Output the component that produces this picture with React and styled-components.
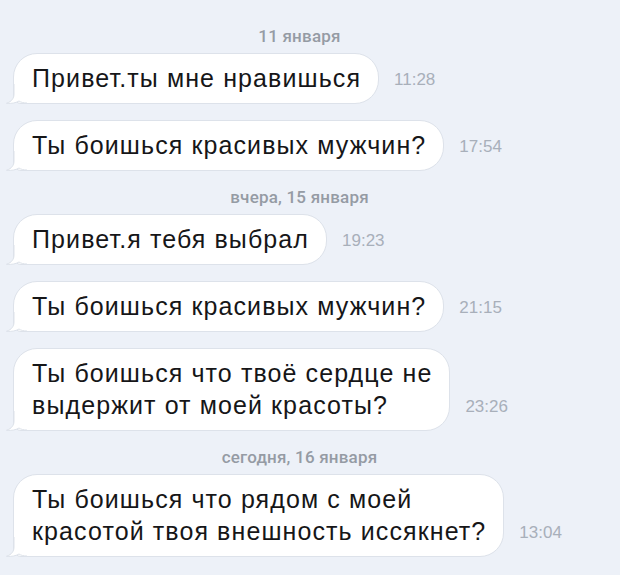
import React from "react";
import styled, { createGlobalStyle } from "styled-components";

const GlobalStyle = createGlobalStyle`
  * {
    margin: 0;
    padding: 0;
    box-sizing: border-box;
  }

  body {
    background-color: #edf1f8;
    font-family: "Liberation Sans", Arial, sans-serif;
    -webkit-font-smoothing: antialiased;
  }
`;

/* --- CHAT --- */
const Chat = styled.div`
  width: 620px;
  height: 575px;
  overflow: hidden;
  display: flex;
  flex-direction: column;
  padding: 26px 34px 0 13px;
  background-color: #edf1f8;
`;

const DateLabel = styled.div`
  align-self: center;
  margin: 0 0 7px;
  line-height: 20px;
  font-family: Roboto, "Liberation Sans", sans-serif;
  font-weight: 500;
  font-size: 17px;
  color: #959ba4;
  letter-spacing: 0.2px;
`;

const Row = styled.div`
  display: flex;
  align-items: flex-end;
  margin-bottom: 16px;
`;

const Bubble = styled.div`
  position: relative;
  background-color: #fff;
  border: 1px solid #dde2ea;
  border-radius: 24px 24px 24px 8px;
  padding: 8px 17px 9px 18px;
  font-size: 25px;
  line-height: 32px;
  letter-spacing: 1.1px;
  color: #161618;
`;

const Tail = styled.svg`
  position: absolute;
  left: -9px;
  bottom: -1px;
`;

const Time = styled.span`
  margin: 0 0 16px 15px;
  font-size: 17px;
  line-height: 17px;
  color: #a8afba;
`;

const BubbleTail = () => (
  <Tail width="22" height="20" viewBox="0 0 22 20">
    <path
      d="M9 0 L9 10 C9 14 7 17.5 1.5 19.3 C7 19.8 11 18.8 14 17 C16 18.3 18.5 19 22 19 L22 0 Z"
      fill="#fff"
    />
    <path
      d="M9 0 L9 10 C9 14 7 17.5 1.5 19.3 C7 19.8 11 18.8 14 17 C16 18.3 18.5 19 22 19"
      fill="none"
      stroke="#dde2ea"
      strokeWidth="1"
    />
  </Tail>
);

const items = [
  { date: "11 января" },
  { lines: ["Привет.ты мне нравишься"], time: "11:28" },
  { lines: ["Ты боишься красивых мужчин?"], time: "17:54" },
  { date: "вчера, 15 января" },
  { lines: ["Привет.я тебя выбрал"], time: "19:23" },
  { lines: ["Ты боишься красивых мужчин?"], time: "21:15" },
  {
    lines: ["Ты боишься что твоё сердце не", "выдержит от моей красоты?"],
    time: "23:26",
  },
  { date: "сегодня, 16 января" },
  {
    lines: ["Ты боишься что рядом с моей", "красотой твоя внешность иссякнет?"],
    time: "13:04",
  },
];

export default function App() {
  return (
    <>
      <GlobalStyle />
      <Chat>
        {items.map((item, i) =>
          item.date ? (
            <DateLabel key={i}>{item.date}</DateLabel>
          ) : (
            <Row key={i}>
              <Bubble>
                {item.lines.map((line, j) => (
                  <div key={j}>{line}</div>
                ))}
                <BubbleTail />
              </Bubble>
              <Time>{item.time}</Time>
            </Row>
          )
        )}
      </Chat>
    </>
  );
}
